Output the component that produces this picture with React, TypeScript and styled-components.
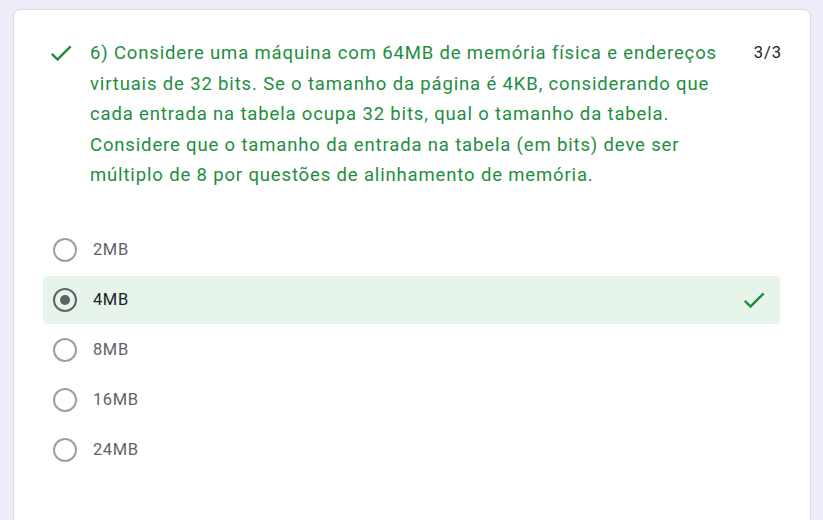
import React from 'react';
import styled, { createGlobalStyle } from 'styled-components';

const GlobalStyle = createGlobalStyle`
  html, body {
    margin: 0;
    padding: 0;
    background: #f0ebf8;
    font-family: Roboto, "Noto Sans", Arial, sans-serif;
  }
`;

const options = ['2MB', '4MB', '8MB', '16MB', '24MB'];
const selected = '4MB';

const questionLines = [
    '6) Considere uma máquina com 64MB de memória física e endereços',
    'virtuais de 32 bits. Se o tamanho da página é 4KB, considerando que',
    'cada entrada na tabela ocupa 32 bits, qual o tamanho da tabela.',
    'Considere que o tamanho da entrada na tabela (em bits) deve ser',
    'múltiplo de 8 por questões de alinhamento de memória.',
];

function Check({ size = 24 }: { size?: number }) {
    return (
        <svg width={size} height={size} viewBox="0 0 24 24">
            <path d="M9 16.17L4.83 12l-1.42 1.41L9 19 21 7l-1.41-1.41z" fill="#1e8e3e" />
        </svg>
    );
}

export default function App() {
    return (
        <Page>
            <GlobalStyle />
            <Card>
                <Header>
                    <QIcon>
                        <Check size={28} />
                    </QIcon>
                    <Question>
                        {questionLines.map((line) => (
                            <Line key={line}>{line}</Line>
                        ))}
                    </Question>
                    <Score>3/3</Score>
                </Header>
                <Options>
                    {options.map((opt) => {
                        const isSel = opt === selected;
                        return (
                            <OptionRow key={opt} $correct={isSel}>
                                <Radio $checked={isSel} />
                                <OptionLabel $checked={isSel}>{opt}</OptionLabel>
                                {isSel && (
                                    <RowCheck>
                                        <Check size={28} />
                                    </RowCheck>
                                )}
                            </OptionRow>
                        );
                    })}
                </Options>
            </Card>
        </Page>
    );
}

const Page = styled.div`
  padding: 9px 12px 0 13px;
  height: 520px;
  box-sizing: border-box;
  overflow: hidden;
`;

const Card = styled.div`
  background: #fff;
  border: 1px solid #dadce0;
  border-radius: 8px;
  padding: 28px 30px 60px 29px;
  min-height: 560px;
  box-sizing: border-box;
`;

const Header = styled.div`
  display: flex;
  align-items: flex-start;
  padding-left: 4px;
`;

const QIcon = styled.div`
  width: 28px;
  height: 28px;
  margin-top: 1px;
  margin-right: 15px;
  flex-shrink: 0;
  display: flex;
`;

const Question = styled.div`
  flex: 1;
  color: #1e8e3e;
  font-size: 18.5px;
  line-height: 30.5px;
  letter-spacing: 0.85px;
  padding-right: 16px;
`;

const Line = styled.div`
  white-space: nowrap;
`;

const Score = styled.div`
  color: #202124;
  font-size: 16.5px;
  line-height: 30px;
  letter-spacing: 1px;
  margin-right: -2px;
  flex-shrink: 0;
`;

const Options = styled.div`
  display: flex;
  flex-direction: column;
  gap: 2px;
  margin-top: 35px;
`;

const OptionRow = styled.div<{ $correct: boolean }>`
  display: flex;
  align-items: center;
  height: 48px;
  padding-left: 10px;
  padding-right: 12px;
  border-radius: 4px;
  background: ${(p) => (p.$correct ? '#e6f4ea' : 'transparent')};
`;

const Radio = styled.div<{ $checked: boolean }>`
  width: 20px;
  height: 20px;
  border-radius: 50%;
  border: 2px solid ${(p) => (p.$checked ? '#5f6368' : '#9aa0a6')};
  display: flex;
  align-items: center;
  justify-content: center;
  flex-shrink: 0;

  &::after {
    content: '';
    display: ${(p) => (p.$checked ? 'block' : 'none')};
    width: 10px;
    height: 10px;
    border-radius: 50%;
    background: #5f6368;
  }
`;

const OptionLabel = styled.span<{ $checked: boolean }>`
  margin-left: 16px;
  font-size: 16.5px;
  letter-spacing: 0.6px;
  color: ${(p) => (p.$checked ? '#202124' : '#5f6368')};
  flex: 1;
`;

const RowCheck = styled.div`
  width: 28px;
  height: 28px;
  display: flex;
`;
